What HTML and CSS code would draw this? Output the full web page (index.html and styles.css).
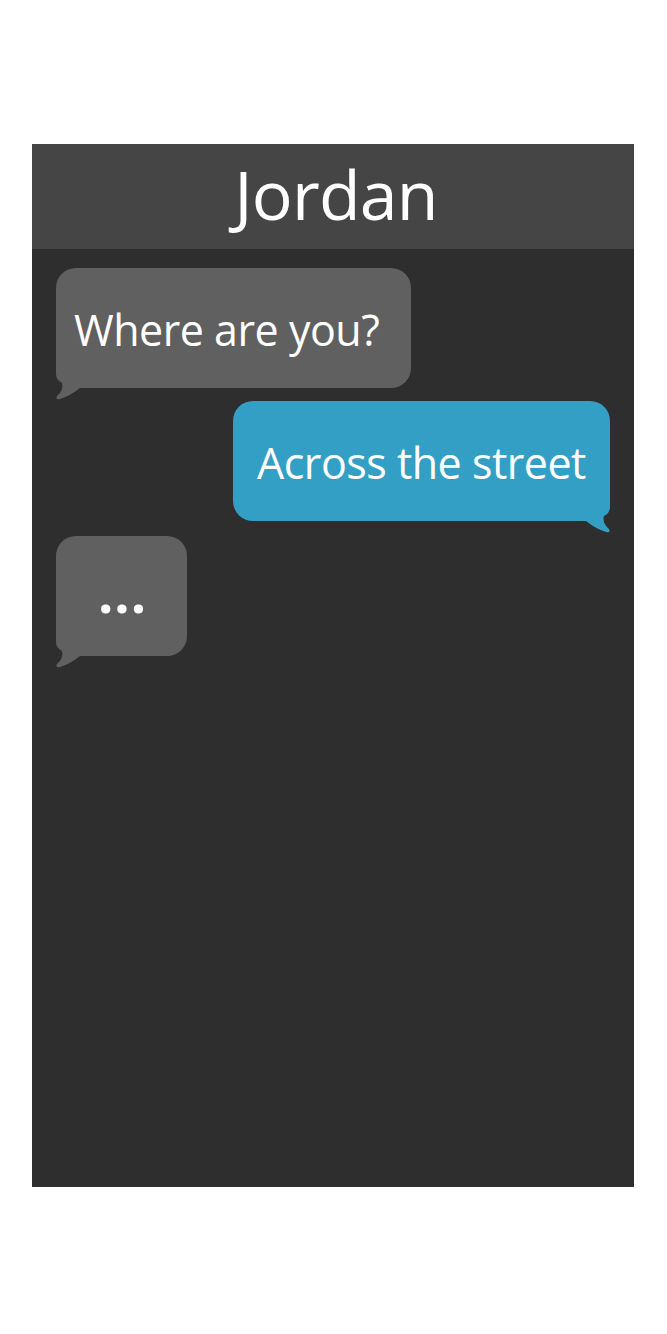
FILE: index.html
```html
<!DOCTYPE html>
<html lang="en">
<head>
<meta charset="utf-8">
<title>Jordan</title>
<link rel="stylesheet" href="styles.css">
</head>
<body>
<div class="phone">
  <header class="header"><span class="header-text">Jordan</span></header>
  <main class="chat">
    <div class="bubble in w1">
      <span class="text">Where are you?</span>
      <svg class="tail" viewBox="-2 -24 26 38" width="26" height="38"><path d="M0,-24 L0,-14 Q0,-8 6,-5 Q8,2 1,8 Q-1,12 4,11 Q14,8 24,0 L24,-24 Z"/></svg>
    </div>
    <div class="bubble out w2">
      <span class="text">Across the street</span>
      <svg class="tail" viewBox="-2 -24 26 38" width="26" height="38"><path d="M0,-24 L0,-14 Q0,-8 6,-5 Q8,2 1,8 Q-1,12 4,11 Q14,8 24,0 L24,-24 Z"/></svg>
    </div>
    <div class="bubble in w3">
      <span class="text dots">...</span>
      <svg class="tail" viewBox="-2 -24 26 38" width="26" height="38"><path d="M0,-24 L0,-14 Q0,-8 6,-5 Q8,2 1,8 Q-1,12 4,11 Q14,8 24,0 L24,-24 Z"/></svg>
    </div>
  </main>
</div>
</body>
</html>
```
FILE: styles.css
```css
html, body {
  margin: 0;
  padding: 0;
  background: #ffffff;
}
body {
  font-family: "Open Sans", "Noto Sans", sans-serif;
  padding-top: 144px;
  padding-left: 32px;
}
.phone {
  width: 602px;
  height: 1043px;
  background: #2e2e2e;
  display: flex;
  flex-direction: column;
}
.header {
  height: 105px;
  background: #454545;
  color: #ffffff;
  font-size: 68px;
  display: flex;
  align-items: center;
  justify-content: center;
  letter-spacing: -0.8px;
  padding-left: 6px;
  box-sizing: border-box;
}
.header-text {
  position: relative;
  top: -3px;
}
.chat {
  padding: 19px 24px;
  display: flex;
  flex-direction: column;
  gap: 13px;
}
.bubble {
  position: relative;
  height: 120px;
  border-radius: 20px;
  display: flex;
  align-items: center;
  justify-content: center;
  color: #ffffff;
  font-size: 43px;
  letter-spacing: -0.5px;
  box-sizing: border-box;
}
.bubble .text {
  position: relative;
  top: 1px;
}
.in {
  background: #606060;
  align-self: flex-start;
  fill: #606060;
}
.out {
  background: #339fc4;
  align-self: flex-end;
  fill: #339fc4;
}
.w1 {
  width: 355px;
  justify-content: flex-start;
  padding-left: 18px;
}
.w2 { width: 377px; }
.w3 {
  width: 131px;
  margin-top: 2px;
}
.tail {
  position: absolute;
  bottom: -14px;
}
.in .tail {
  left: -2px;
}
.out .tail {
  right: -2px;
  transform: scaleX(-1);
}
.bubble .dots {
  font-size: 54px;
  font-weight: 700;
  letter-spacing: 1px;
  top: -4px;
  left: 1px;
}
```
